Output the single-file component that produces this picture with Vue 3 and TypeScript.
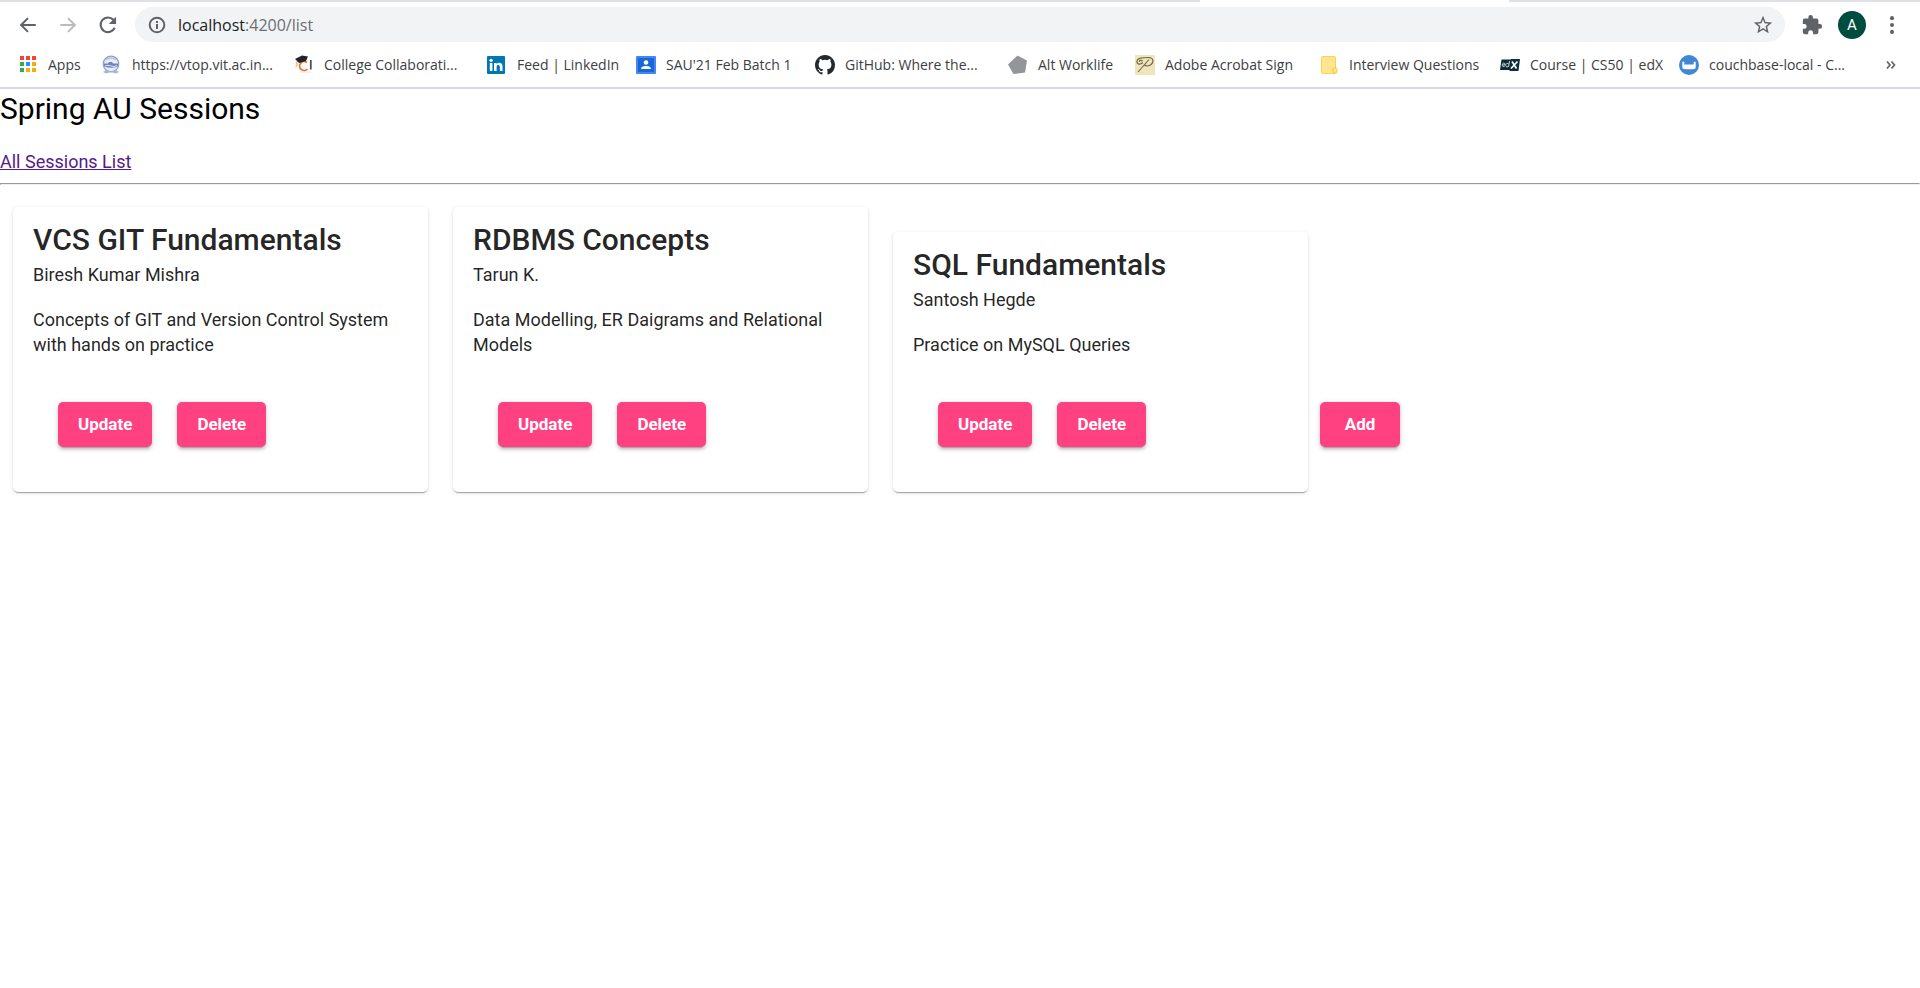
<script setup lang="ts">
interface Bookmark {
  icon: string
  label: string
}
interface Session {
  title: string
  instructor: string
  description: string
}

const bookmarks: Bookmark[] = [
  { icon: 'apps', label: 'Apps' },
  { icon: 'vtop', label: 'https://vtop.vit.ac.in...' },
  { icon: 'college', label: 'College Collaborati...' },
  { icon: 'linkedin', label: 'Feed | LinkedIn' },
  { icon: 'classroom', label: "SAU'21 Feb Batch 1" },
  { icon: 'github', label: 'GitHub: Where the...' },
  { icon: 'pentagon', label: 'Alt Worklife' },
  { icon: 'sign', label: 'Adobe Acrobat Sign' },
  { icon: 'note', label: 'Interview Questions' },
  { icon: 'edx', label: 'Course | CS50 | edX' },
  { icon: 'couchbase', label: 'couchbase-local - C...' },
]

const appColors = ['#f44336', '#f44336', '#f44336', '#34a853', '#2196f3', '#fbab09', '#34a853', '#fbab09', '#fbab09']

const sessions: Session[] = [
  {
    title: 'VCS GIT Fundamentals',
    instructor: 'Biresh Kumar Mishra',
    description: 'Concepts of GIT and Version Control System with hands on practice',
  },
  {
    title: 'RDBMS Concepts',
    instructor: 'Tarun K.',
    description: 'Data Modelling, ER Daigrams and Relational Models',
  },
  {
    title: 'SQL Fundamentals',
    instructor: 'Santosh Hegde',
    description: 'Practice on MySQL Queries',
  },
]
</script>

<template>
  <div class="browser">
    <header class="chrome">
      <div class="tabstrip"><span></span><span class="active-tab"></span><span></span></div>
      <div class="toolbar">
        <nav class="nav-buttons">
          <button type="button" class="icon-button" aria-label="Back">
            <svg viewBox="0 0 24 24"><path d="M20.5 12H5M12 4.5 4.5 12l7.500 7.500" fill="none" stroke="#5f6368" stroke-width="2.200" /></svg>
          </button>
          <button type="button" class="icon-button" aria-label="Forward">
            <svg viewBox="0 0 24 24"><path d="M3.500 12H19M12 4.500l7.500 7.500-7.500 7.500" fill="none" stroke="#babcbe" stroke-width="2.200" /></svg>
          </button>
          <button type="button" class="icon-button" aria-label="Reload">
            <svg viewBox="0 0 24 24"><path d="M19.300 15A8 8 0 1 1 17.800 6.300L19.500 8" fill="none" stroke="#5f6368" stroke-width="2.300" /><path d="M20.800 3v8h-8z" fill="#5f6368" /></svg>
          </button>
        </nav>
        <div class="omnibox">
          <svg class="info" viewBox="0 0 20 20"><circle cx="10" cy="10" r="7.300" fill="none" stroke="#5f6368" stroke-width="2" /><path d="M9 9h2v5H9zM9 6h2v2H9z" fill="#5f6368" /></svg>
          <a class="url" href="#"><span class="host">localhost</span>:4200/list</a>
          <button type="button" class="icon-button star" aria-label="Bookmark this tab">
            <svg viewBox="0 0 24 24"><path fill="#5f6368" d="m22 9.240-7.190-.62L12 2 9.190 8.630 2 9.240l5.460 4.730L5.820 21 12 17.270 18.180 21l-1.630-7.030zM12 15.400l-3.760 2.270 1-4.280-3.320-2.880 4.380-.38L12 6.100l1.710 4.040 4.380.38-3.320 2.880 1 4.280z" /></svg>
          </button>
        </div>
        <div class="actions">
          <button type="button" class="icon-button" aria-label="Extensions">
            <svg viewBox="0 0 24 24"><path fill="#5f6368" d="M20.500 11H19V7a2 2 0 0 0-2-2h-4V3.500a2.500 2.500 0 0 0-5 0V5H4a2 2 0 0 0-2 2v3.800h1.500a2.700 2.700 0 0 1 0 5.400H2V20a2 2 0 0 0 2 2h3.800v-1.500a2.700 2.700 0 0 1 5.400 0V22H17a2 2 0 0 0 2-2v-4h1.500a2.500 2.500 0 0 0 0-5z" /></svg>
          </button>
          <button type="button" class="avatar">A</button>
          <button type="button" class="icon-button" aria-label="Menu">
            <svg viewBox="0 0 24 24"><g fill="#5f6368"><circle cx="12" cy="4.500" r="2.200" /><circle cx="12" cy="12" r="2.200" /><circle cx="12" cy="19.500" r="2.200" /></g></svg>
          </button>
        </div>
      </div>

      <nav class="bookmarks">
        <a v-for="b in bookmarks" :key="b.icon" href="#" class="bookmark">
          <svg v-if="b.icon === 'apps'" viewBox="0 0 20 20">
            <rect v-for="(c, i) in appColors" :key="i" :x="2 + (i % 3) * 6" :y="1 + Math.floor(i / 3) * 6" width="4" height="4" :fill="c" />
          </svg>
          <svg v-else-if="b.icon === 'vtop'" viewBox="0 0 20 20">
            <circle cx="9" cy="9" r="7.800" fill="#e9edf7" stroke="#8c9fcb" stroke-width="1.200" />
            <path d="M3.500 5q5.500-4 11 0" fill="none" stroke="#b4c1df" stroke-width="1.500" />
            <path d="M2 8.500h4l1-1.500h3l1 1.500h5v3q-7 2.500-14 0z" fill="#6f86bd" />
            <path d="M3 11q3-1.500 6 0t6-.5" fill="none" stroke="#dce4f4" />
            <path d="m1 17 3-2 5 1.500 5-1.500 3 2-3 1.500-5-1.500-5 1.500z" fill="#a7b5d8" />
          </svg>
          <svg v-else-if="b.icon === 'college'" viewBox="0 0 20 20">
            <path d="M13 7.500A4.500 4.500 0 1 0 13.500 14" fill="none" stroke="#ef7231" stroke-width="1.800" />
            <path d="M3.500 6q-1.500 1.500-.5 3t-1.500 3" fill="none" stroke="#f28a43" />
            <path d="m1 4 7-3.500 6 1-2 4.500-7 2z" fill="#20242a" />
            <path d="M16.800 5v9.500" stroke="#4b4b4b" stroke-width="1.700" />
            <path d="M6 17h11" stroke="#e4e4e4" />
          </svg>
          <svg v-else-if="b.icon === 'linkedin'" viewBox="0 0 20 20">
            <rect y="1" width="18" height="18" rx="1" fill="#0077b5" />
            <path d="M2.800 8h2.600v8H2.800zM7 8h2.500v1.200c1.400-2.200 6-1.900 6 2.100V16h-2.600v-4.200c0-2.300-3.300-2.200-3.300 0V16H7z" fill="#fff" /><circle cx="4.100" cy="5.300" r="1.600" fill="#fff" />
          </svg>
          <svg v-else-if="b.icon === 'classroom'" viewBox="0 0 20 20">
            <rect y="1" width="20" height="18" rx="1" fill="#4285f4" /><rect x="2" y="3" width="16" height="14" fill="#1967d2" />
            <circle cx="10" cy="7.500" r="2.300" fill="#fff" /><path d="M5 14q0-3 5-3t5 3z" fill="#fff" />
          </svg>
          <svg v-else-if="b.icon === 'github'" viewBox="0 0 16 16">
            <path fill="#24292e" d="M8 0C3.580 0 0 3.580 0 8c0 3.540 2.290 6.530 5.470 7.590.4.070.55-.17.55-.38 0-.19-.01-.82-.01-1.490-2.010.37-2.530-.49-2.690-.94-.09-.23-.48-.94-.82-1.130-.28-.15-.68-.52-.01-.53.63-.01 1.080.58 1.230.82.72 1.210 1.870.87 2.330.66.07-.52.28-.87.510-1.070-1.780-.2-3.640-.89-3.640-3.950 0-.87.31-1.590.82-2.150-.08-.2-.36-1.020.08-2.120 0 0 .67-.21 2.200.82a7.400 7.400 0 0 1 4 0c1.530-1.040 2.200-.82 2.200-.82.44 1.100.16 1.920.08 2.120.51.56.82 1.270.82 2.150 0 3.070-1.870 3.750-3.650 3.950.29.25.54.73.54 1.480 0 1.070-.01 1.930-.01 2.200 0 .21.15.46.55.38A8.010 8.010 0 0 0 16 8c0-4.420-3.580-8-8-8z" />
          </svg>
          <svg v-else-if="b.icon === 'pentagon'" viewBox="0 0 20 20">
            <path d="m9.500.5 9.500 5-2 12L5.500 19 0 9.500z" fill="#939598" />
          </svg>
          <svg v-else-if="b.icon === 'sign'" viewBox="0 0 20 20">
            <rect width="20" height="20" fill="#efe5bd" />
            <path d="M3 17 14 4.500M8 7.500C4.500 10.500 1.500 9 2 6c.7-3.500 6-3.500 11-3.500 6 0 6 4.500 3 7-2 1.700-5 2-6.500.5M4 6.500q2-2 3.500-.5" fill="none" stroke="#706142" stroke-width="1.100" />
          </svg>
          <svg v-else-if="b.icon === 'note'" viewBox="0 0 20 20">
            <rect x="2.500" y="1.500" width="14" height="17" rx="1" fill="#ffe58f" stroke="#f9d34d" /><rect x="14" y="13" width="4" height="5" rx="1.500" fill="#ffe58f" stroke="#f4c52d" />
          </svg>
          <svg v-else-if="b.icon === 'edx'" viewBox="0 0 20 20">
            <path d="M1.500 4.500h11L11 15H0z" fill="#0d2a32" /><path d="M11 4h9l-1.500 12H9.500z" fill="#0b3038" />
            <path d="M2.500 10h2.300q.3-2-1-2-1.800.3-1.500 2.800.7 1.600 2.300.5M9.500 6l-1 6M8.800 9q-2-1.800-3 .5-.3 3.500 2.500 2" fill="none" stroke="#c5d0d2" /><path d="m12 6.500 4.500 7M17.500 6.500l-6.500 7" stroke="#fff" stroke-width="1.700" />
          </svg>
          <svg v-else viewBox="0 0 20 20">
            <circle cx="10" cy="10" r="10" fill="#4287d6" /><path d="M3.300 7q1.700-1 2 0v2.600h9.400V7q.3-1 2 0v5.500q0 1.300-1.400 1.500-5.300.6-10.600 0-1.400-.2-1.400-1.500z" fill="#fff" />
          </svg>
          <span>{{ b.label }}</span>
        </a>
        <button type="button" class="overflow" aria-label="More bookmarks">
          <svg viewBox="0 0 12 12"><path d="m2 2.500 3 3.500-3 3.500M6.500 2.500l3 3.500-3 3.500" fill="none" stroke="#5f6368" stroke-width="1.700" /></svg>
        </button>
      </nav>
    </header>

    <main class="page">
      <h1>Spring AU Sessions</h1>
      <a class="list-link" href="#">All Sessions List</a>
      <hr />
      <div class="sessions">
        <article v-for="s in sessions" :key="s.title" class="card">
          <h2>{{ s.title }}</h2>
          <p class="instructor">{{ s.instructor }}</p>
          <p class="description">{{ s.description }}</p>
          <div class="card-actions">
            <button type="button" class="raised">Update</button>
            <button type="button" class="raised">Delete</button>
          </div>
        </article>
        <button type="button" class="raised add">Add</button>
      </div>
    </main>
  </div>
</template>

<style>
body {
  margin: 0;
  background: #fff;
}
</style>

<style scoped>
.browser {
  min-height: 100vh;
  background: #fff;
}
button {
  border: 0;
  padding: 0;
  cursor: pointer;
}
svg {
  display: block;
  flex: none;
}
.chrome {
  border-bottom: 2px solid #d8d8e0;
  font-family: "Segoe UI", "Open Sans", "Noto Sans", sans-serif;
}
.tabstrip {
  display: grid;
  grid-template-columns: 1200fr 309fr 411fr;
  height: 2px;
  background: #dee1e6;
}
.active-tab {
  background: #fff;
}
.toolbar {
  display: flex;
  align-items: center;
  padding: 5px 16px 0;
}
.nav-buttons {
  display: flex;
  gap: 16px;
  margin-right: 15px;
}
.icon-button {
  display: flex;
  align-items: center;
  justify-content: center;
  width: 24px;
  height: 24px;
  background: transparent;
}
.icon-button svg {
  width: 22px;
  height: 22px;
}
.omnibox {
  display: flex;
  flex: 1;
  align-items: center;
  height: 35px;
  padding: 0 10px 0 12px;
  border-radius: 18px;
  background: #f1f3f4;
}
.info {
  width: 20px;
  height: 20px;
}
.url {
  flex: 1;
  margin-left: 11px;
  color: #6b6f74;
  font-size: 16px;
  line-height: 24px;
  text-decoration: none;
}
.host {
  color: #202124;
}
.actions {
  display: flex;
  align-items: center;
  gap: 14px;
  margin-left: 15px;
}
.avatar {
  width: 28px;
  height: 28px;
  border-radius: 50%;
  background: #004d40;
  color: #fff;
  font: 15px Roboto, sans-serif;
}
.bookmarks {
  display: grid;
  grid-template-columns: 84fr 192fr 193fr 149fr 179fr 193fr 127fr 184fr 181fr 179fr 206fr 17fr;
  align-items: center;
  height: 45px;
  padding: 0 18px;
}
.bookmark {
  display: flex;
  align-items: center;
  gap: 10px;
  color: #3c4043;
  font-size: 14px;
  line-height: 20px;
  white-space: nowrap;
  text-decoration: none;
}
.bookmark svg {
  width: 20px;
  height: 20px;
}
.overflow {
  background: transparent;
}
.overflow svg {
  width: 12px;
  height: 12px;
}
.page {
  font: 18px/25px Roboto, "Helvetica Neue", sans-serif;
}
h1 {
  margin: 0 0 20px;
  color: #000;
  font-size: 30px;
  font-weight: 400;
  line-height: 40px;
}
.list-link {
  display: block;
  width: fit-content;
  color: #551a8b;
}
hr {
  margin: 9px 0;
}
.sessions {
  display: flex;
  flex-wrap: wrap;
  align-items: flex-end;
  gap: 25px;
  padding: 13px;
}
.card {
  box-sizing: border-box;
  width: 415px;
  padding: 20px;
  border-radius: 5px;
  color: rgba(0, 0, 0, 0.87);
  box-shadow: 0 3px 1px -2px rgba(0, 0, 0, 0.2), 0 1px 1px rgba(0, 0, 0, 0.14), 0 1px 4px rgba(0, 0, 0, 0.12);
}
h2 {
  margin: 0 0 10px;
  font-size: 30px;
  font-weight: 500;
  line-height: 25px;
}
p {
  margin: 0 0 20px;
}
p.instructor {
  margin-bottom: 20px;
}
.card-actions {
  display: flex;
  gap: 25px;
  padding: 25px;
}
.raised {
  height: 45px;
  padding: 0 20px;
  border-radius: 5px;
  background: #ff4081;
  color: #fff;
  font: 700 17px/45px Roboto, "Helvetica Neue", sans-serif;
  box-shadow: 0 4px 1px -3px rgba(0, 0, 0, 0.2), 0 3px 3px rgba(0, 0, 0, 0.14), 0 1px 6px rgba(0, 0, 0, 0.12);
}
.add {
  min-width: 80px;
  margin: 0 0 45px -13px;
}
</style>
